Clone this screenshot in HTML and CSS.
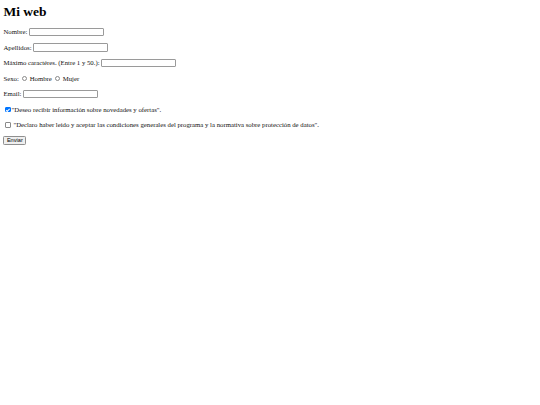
FILE: index.html
```html
<!DOCTYPE html>
<html lang="es">
<head>
<meta charset="utf-8">
<title>Mi web</title>
<link rel="stylesheet" href="styles.css">
</head>
<body>
<h1 class="title">Mi web</h1>
<form class="form">
  <div class="row"><label for="nombre">Nombre:</label><input class="text" id="nombre" type="text"></div>
  <div class="row"><label for="apellidos">Apellidos:</label><input class="text" id="apellidos" type="text"></div>
  <div class="row"><label for="max">Máximo caractéres. (Entre 1 y 50.):</label><input class="text" id="max" type="text"></div>
  <div class="row">Sexo: <input class="radio" type="radio" name="sexo" id="h"><label for="h">Hombre</label><input class="radio" type="radio" name="sexo" id="m"><label for="m">Mujer</label></div>
  <div class="row"><label for="email">Email:</label><input class="text" id="email" type="email"></div>
  <div class="row"><input class="check" type="checkbox" id="c1" checked><label for="c1">"Deseo recibir información sobre novedades y ofertas".</label></div>
  <div class="row"><input class="check" type="checkbox" id="c2"><label class="gap" for="c2">"Declaro haber leido y aceptar las condiciones generales del programa y la normativa sobre protección de datos".</label></div>
  <div class="row"><button class="btn" type="button">Enviar</button></div>
</form>
</body>
</html>
```

FILE: styles.css
```css
html, body { background: #ffffff; }
body {
  margin: 3.4px;
  font-family: "Liberation Serif", "Times New Roman", serif;
  font-size: 6.75px;
  color: #111111;
}
.title {
  font-size: 13.5px;
  font-weight: bold;
  margin: 1px 0 8px 0;
  line-height: 15px;
  color: #000;
}
.form {
  display: flex;
  flex-direction: column;
  gap: 6.5px;
}
.row {
  display: flex;
  align-items: center;
  height: 9px;
  white-space: nowrap;
}
.text {
  box-sizing: border-box;
  width: 75px;
  height: 8.5px;
  margin: 0 0 0 1.5px;
  padding: 0;
  border: 1px solid #9a9a9a;
  border-radius: 1px;
  background: #fff;
  font-size: 5.6px;
}
.radio {
  appearance: none;
  -webkit-appearance: none;
  box-sizing: border-box;
  width: 5.4px;
  height: 5.4px;
  margin: 0 2.5px 0 3px;
  border: 0.8px solid #8a8a8a;
  border-radius: 50%;
  background: #fff;
}
.check {
  appearance: none;
  -webkit-appearance: none;
  box-sizing: border-box;
  width: 5.4px;
  height: 5.4px;
  margin: 0 1px 0 1.8px;
  border: 0.8px solid #8a8a8a;
  border-radius: 1px;
  background: #fff;
  position: relative;
}
.check:checked {
  background: #0075ff;
  border-color: #0075ff;
}
.check:checked::after {
  content: "";
  position: absolute;
  left: 1.3px;
  top: 0.2px;
  width: 1.3px;
  height: 2.6px;
  border: solid #fff;
  border-width: 0 0.8px 0.8px 0;
  transform: rotate(45deg);
}
.gap { margin-left: 1.8px; }
.btn {
  font-family: Arial, "Liberation Sans", sans-serif;
  font-size: 5.6px;
  height: 8.5px;
  padding: 0 2.5px;
  margin: 0;
  border: 1px solid #8f8f8f;
  border-radius: 1.3px;
  background: #efefef;
  color: #000;
  line-height: 1;
}
```
